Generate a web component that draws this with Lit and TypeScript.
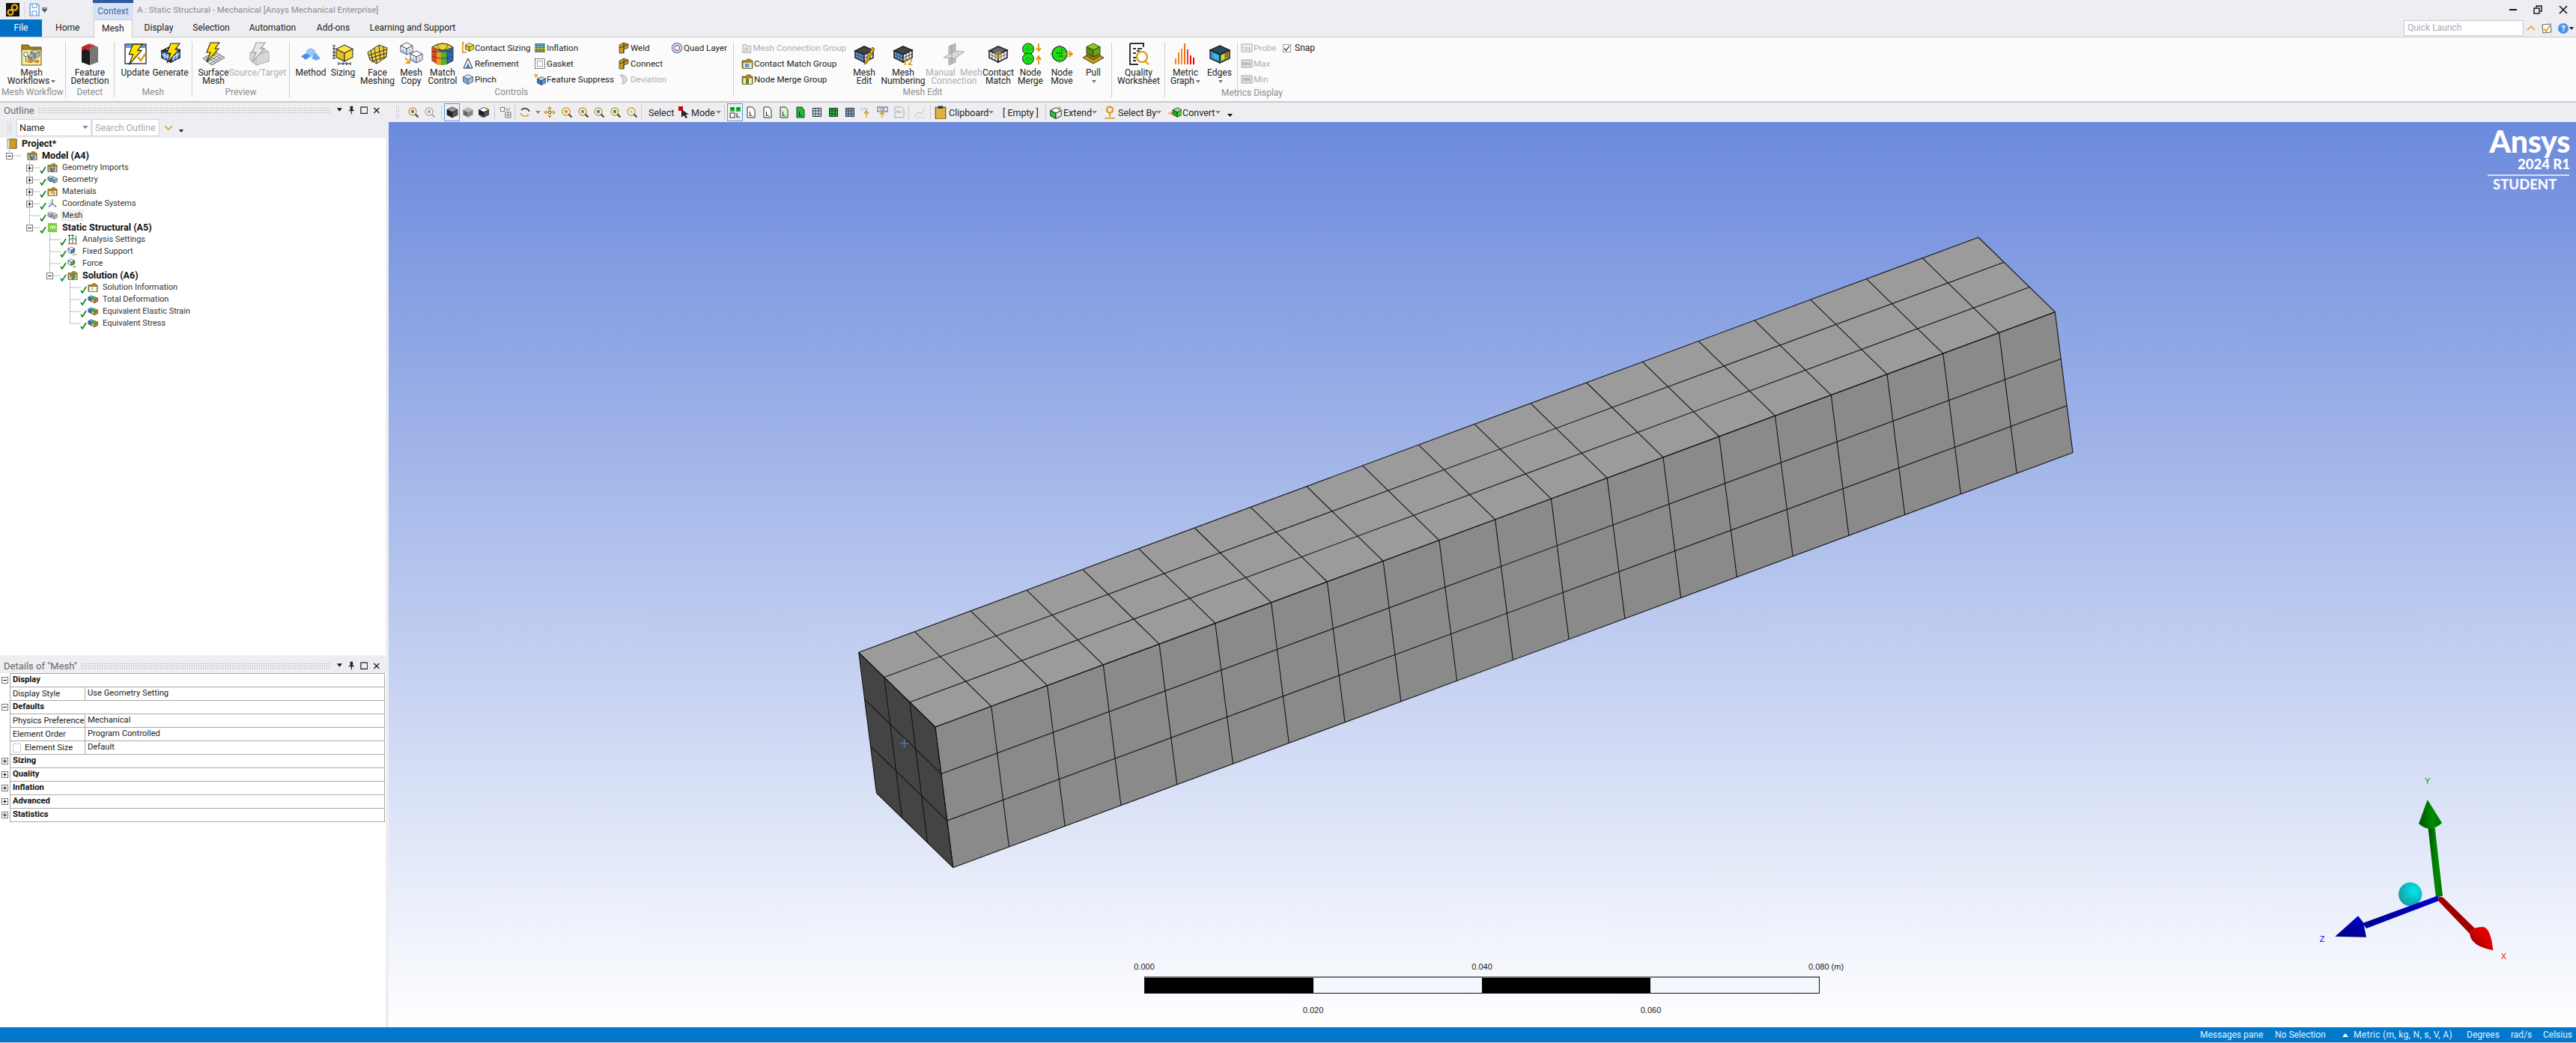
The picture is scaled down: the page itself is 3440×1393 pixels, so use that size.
import { LitElement, html, css, svg } from "lit";
import { customElement } from "lit/decorators.js";

const big = (c: any, w = 32, h = 32) => html`<svg width=${w} height=${h} viewBox="0 0 32 32">${c}</svg>`;
const sm = (c: any, s = 16) => html`<svg width=${s} height=${s} viewBox="0 0 16 16">${c}</svg>`;

const cube = (cx: number, cy: number, r: number, t: string, l: string, f: string, st = "#222", sw = 1) => svg`
  <polygon points="${cx},${cy - r} ${cx + r},${cy - r / 2} ${cx},${cy} ${cx - r},${cy - r / 2}" fill=${t} stroke=${st} stroke-width=${sw}/>
  <polygon points="${cx - r},${cy - r / 2} ${cx},${cy} ${cx},${cy + r} ${cx - r},${cy + r / 2}" fill=${l} stroke=${st} stroke-width=${sw}/>
  <polygon points="${cx},${cy} ${cx + r},${cy - r / 2} ${cx + r},${cy + r / 2} ${cx},${cy + r}" fill=${f} stroke=${st} stroke-width=${sw}/>`;

const bolt = (fill = "#ffe000", st = "#222", dx = 0, dy = 0, k = 1) => svg`<path transform="translate(${dx} ${dy}) scale(${k})" d="M11 1 L23 1 L17 9 L22 9 L6 27 L11 14 L6 14 Z" fill=${fill} stroke=${st} stroke-width="1.1"/>`;

const box = (fillT: string, fillL: string, fillR: string, grid = "#fff") => svg`
  <polygon points="4,12 16,6 28,11 16,17" fill=${fillT} stroke="#222" stroke-width="1.6"/>
  <polygon points="4,12 16,17 16,27 4,21" fill=${fillL} stroke="#222" stroke-width="1.6"/>
  <polygon points="16,17 28,11 28,21 16,27" fill=${fillR} stroke="#222" stroke-width="1.6"/>
  <path d="M8 14 V23 M12 15.5 V25 M4 16.5 L16 21.5 M20 15 V25 M24 13 V23 M16 21.5 L28 16 M10 9 L22 14 M10 14.5 L22 8.5" stroke=${grid} stroke-width="1" fill="none"/>`;

const folder = (body = "#f5eeb0") => svg`
  <path d="M1 4 H6 L7.5 2 H12 L13 4 H15 V14 H1 Z" fill="#b88a10" stroke="#5c4a10" stroke-width=".7"/>
  <rect x="2" y="6" width="12.5" height="8.5" fill=${body} stroke="#6a5518" stroke-width=".8"/>`;

const ICON: Record<string, any> = {
  meshWf: big(svg`<path d="M3 4 H12 L14 7 H29 V14 H3 Z" fill="#a8801a" stroke="#5c4a10"/><rect x="3" y="10" width="26" height="21" fill="#f4ecaa" stroke="#6a5518"/>
    ${cube(21, 16, 6, "#c8d0c8", "#98a098", "#b0b8b0", "#555", .7)}${cube(16, 21, 4.5, "#c8d0c8", "#98a098", "#b0b8b0", "#555", .7)}
    <rect x="6" y="14" width="5" height="5" fill="#fff" stroke="#777"/><rect x="12" y="24" width="5" height="4" fill="#e08a10"/><rect x="21" y="24" width="5" height="4" fill="#e08a10"/><path d="M8.5 19 V26 H12 M17 26 H21" stroke="#7a6a20" fill="none"/>`),
  featDet: big(svg`<path d="M5 7 L16 2 L27 7 V27 L16 31 L5 27 Z" fill="#777"/><path d="M5 7 L16 12 V31 L5 27 Z" fill="#1c1c1c"/><path d="M5 7 L13 3 L19 6 L15 8 L16 13 L11 9 L5 12 Z" fill="#cc1d2a"/><circle cx="20" cy="5.5" r="2" fill="#e0304a"/>`),
  update: big(svg`<rect x="2" y="3" width="28" height="26" fill="#fff" stroke="#333" stroke-width="1.4"/><rect x="3" y="4" width="26" height="4" fill="#5a9be8"/>${bolt("#ffe000", "#222", 1, 2, 1.05)}<path d="M19 20 L23 25 L29 16" stroke="#d89a10" stroke-width="2.4" fill="none"/>`),
  generate: big(svg`${box("#3a3a3a", "#4a8ae0", "#4a8ae0")}${bolt("#ffe000", "#222", 5, 1, 1)}`),
  surface: big(svg`<polygon points="2,22 18,13 31,21 14,31" fill="#e4e4e4" stroke="#444" stroke-width=".8"/><path d="M6 20 L19 28 M10 18 L23 26 M14 15.5 L27 23.5 M5 24 L21 15 M9 26 L25 17 M12 29 L28 19" stroke="#555" stroke-width=".7"/>${bolt("#ffe000", "#222", 1, 0, 1)}`),
  source: big(svg`<polygon points="6,14 22,7 31,14 31,26 14,31 6,24" fill="#d8d8d8" stroke="#aaa"/><path d="M14 31 V18 L31 12" stroke="#aaa" fill="none"/>${bolt("#e8e8e8", "#999", 3, 0, 1)}`),
  method: big(svg`<polygon points="16,8 22,11 22,17 16,20 10,17 10,11" fill="#9cc6f4"/><polygon points="3,19 10,15 16,19 9,24" fill="#4a90e8"/><polygon points="17,22 22,14 29,22 23,25" fill="#6aa8f0"/>`),
  sizing: big(svg`${cube(18, 15, 11, "#ffe450", "#e0c020", "#f4d830", "#333", 1.1)}<path d="M4 5 V22 M2 5 H6 M2 9 H6 M2 14 H6 M2 18 H6 M2 22 H6 M10 29 H26 M10 27 V31 M16 27 V31 M21 27 V31 M26 27 V31" stroke="#222" fill="none"/>`),
  faceMesh: big(svg`<polygon points="3,14 18,4 29,8 28,20 15,29 6,24" fill="#f0d040" stroke="#333"/><path d="M7 11 L10 27 M12 8 L15 29 M18 4 L20 24 M24 6 L25 22 M4 18 L28 10 M5 22 L28 15 M8 26 L28 20" stroke="#333" stroke-width="1" fill="none"/>`),
  meshCopy: big(svg`${cube(10, 9, 8, "#fff", "#f2f6ff", "#e8f0ff", "#444", .9)}${cube(23, 20, 8, "#fff", "#f2f6ff", "#e8f0ff", "#444", .9)}<path d="M6 9 V15 M14 9 V15 M19 20 V26 M27 20 V26 M2 11 L10 15 M15 22 L23 26" stroke="#5a9be8" fill="none"/><path d="M8 21 L14 28 M14 23 V28 H9" stroke="#e09a10" stroke-width="1.8" fill="none"/>`),
  match: big(svg`<path d="M2 7 Q16 -3 30 7 V25 Q16 35 2 25 Z" fill="#2a6ab0" stroke="#333"/><path d="M2 7 Q16 -3 30 7 Q16 15 2 7 Z" fill="#f0d030" stroke="#333"/><path d="M8 8 V30 L2 25 V7 Z" fill="#d84a20"/><path d="M8 11 V30 Q11 31 14 31 V13 Z" fill="#e8a020"/><path d="M14 13 V31 Q19 31 22 30 V12 Z" fill="#50b040"/><path d="M2 13 L30 13 M2 19 Q16 25 30 19 M8 3 L14 13 M24 3 L18 13 M22 12 V30" stroke="#333" stroke-width=".8" fill="none"/>`),
  meshEdit: big(svg`${box("#444", "#5a9be8", "#eef3ff", "#444")}<path d="M17 27 L27 7 L30 9 L20 28 L16 30 Z" fill="#e0a820" stroke="#7a5a10"/>`),
  numbering: big(svg`${box("#444", "#5a9be8", "#eef3ff", "#444")}<text x="15" y="31" font-size="12" font-weight="700" font-family="Roboto" fill="#d89a10">12</text>`),
  manual: big(svg`<polygon points="9,6 18,2 18,27 9,31" fill="#bcbcbc" stroke="#aaa"/><polygon points="2,21 18,12 30,13 17,22" fill="#d8d8d8" stroke="#aaa"/><path d="M13 4 V29" stroke="#999"/>`),
  contact: big(svg`${box("#666", "#f0f4ff", "#eef3ff", "#6a6a6a")}<polygon points="10,15 19,12 22,20 13,23" fill="#c8a040" opacity=".6"/>`),
  nodeMerge: big(svg`<circle cx="13" cy="9.5" r="7.5" fill="#19e010" stroke="#222"/><circle cx="13" cy="22.5" r="7.5" fill="#19e010" stroke="#222"/><path d="M13 6 v1 M13 10 v1 M10 9 h1 M16 9 h1 M13 21 v1 M13 25 v1 M10 23 h1 M16 23 h1" stroke="#222"/><path d="M27 2 V11 M24 8 L27 12 L30 8 M27 30 V20 M24 24 L27 19 L30 24" stroke="#d89a10" stroke-width="1.8" fill="none"/>`),
  nodeMove: big(svg`<circle cx="13" cy="16" r="10" fill="#19e010" stroke="#222" stroke-width="1.2"/><path d="M9 15h2M12 15h2M15 15h2M15 11h2M15 19h2M12 19h2" stroke="#222" stroke-width="1.4"/><path d="M1 16h1M13 4v1M13 27v1" stroke="#222"/><path d="M17 16 H29 M25 12 L30 16 L25 20" stroke="#d89a10" stroke-width="1.8" fill="none"/>`),
  pull: big(svg`<polygon points="2,21 16,13 30,21 16,29" fill="#c89a20" stroke="#4a3a10"/><polygon points="6,18 16,12 26,18 16,24" fill="#a07a10" stroke="#4a3a10"/>${cube(16, 11, 9, "#8ac820", "#558a10", "#6aa818", "#2a3a10", .9)}`),
  quality: big(svg`<path d="M4 2 H22 V7 M4 2 V30 H15" stroke="#333" stroke-width="2" fill="none"/><path d="M8 9 H12 M14 9 H20 M8 15 H12 M8 21 H12 M8 25 H12 M13 12 H17" stroke="#333" stroke-width="2"/><circle cx="20" cy="20" r="7" fill="none" stroke="#d89a10" stroke-width="2.2"/><path d="M23 25 L29 30" stroke="#d89a10" stroke-width="2.2"/>`),
  metric: big(svg`<path d="M3 30 V22" stroke="#f08020" stroke-width="2"/><path d="M7 30 V14" stroke="#f08020" stroke-width="2"/><path d="M11 30 V9" stroke="#f09020" stroke-width="2"/><path d="M15 30 V2" stroke="#f07020" stroke-width="2"/><path d="M19 30 V10" stroke="#f04020" stroke-width="2"/><path d="M23 30 V18" stroke="#f01010" stroke-width="2"/><path d="M27 30 V21" stroke="#f00010" stroke-width="2"/>`),
  edges: big(svg`<polygon points="3,11 16,5 29,11 16,17" fill="#2a4a6a" stroke="#222" stroke-width="1.4"/><polygon points="3,11 16,17 16,28 3,22" fill="#3a90e0" stroke="#222" stroke-width="1.4"/><polygon points="16,17 29,11 29,22 16,28" fill="#60b040" stroke="#222" stroke-width="1.4"/><path d="M8 15 L14 18 V24 L8 21 Z" fill="#30c8d0"/><path d="M18 18 L22 16 V23 L18 25 Z" fill="#e8d030"/><path d="M23 15 L27 13 V20 L23 22 Z" fill="#e84a20"/>`),

  cs: sm(svg`${cube(10, 7, 5.5, "#ffe450", "#e0c020", "#f4d830", "#333", .7)}<path d="M3 1 H1 V14 H6" stroke="#d88a10" stroke-width="1.5" fill="none"/>`),
  ref: sm(svg`<polygon points="8,1 14,14 2,14" fill="#f4f8ff" stroke="#222"/><polygon points="8,7 11,14 5,14" fill="#3a78d0"/>`),
  pinch: sm(svg`${cube(8, 8, 6.5, "#d4e4f4", "#88a8cc", "#a8c4e0", "#456", .8)}`),
  infl: sm(svg`<rect x="1" y="2" width="14" height="12" fill="#3a8a90"/><path d="M1 4h14M1 6.5h14" stroke="#9ad0d8"/><path d="M1 9h14" stroke="#e8d030" stroke-width="1.5"/><path d="M1 12h14" stroke="#c8a020" stroke-width="1.5"/><path d="M4 2v12M8 2v12M12 2v12" stroke="#234" stroke-width=".5"/>`),
  gasket: sm(svg`<rect x="1.5" y="1.5" width="13" height="13" fill="none" stroke="#333" stroke-dasharray="1.5 1"/><rect x="4.5" y="4.5" width="7" height="7" fill="none" stroke="#555" stroke-dasharray="1 1"/>`),
  fsup: sm(svg`<path d="M1 1 L5 5 M5 1 L1 5" stroke="#d89a10" stroke-width="1.4"/>${cube(10, 10, 5.5, "#bcd8f0", "#3a78c0", "#5a9be0", "#234", .7)}`),
  weld: sm(svg`<polygon points="2,4 8,1 14,3 14,8 8,10 8,15 2,15" fill="#c89a20" stroke="#333" stroke-width=".7"/><path d="M2 8 L8 6 L14 3 M8 1 V15" stroke="#333" stroke-width="1" fill="none"/>`),
  dev: sm(svg`<path d="M3 2 Q13 3 12 9 Q11 14 5 14 Q10 10 3 2 Z" fill="#ddd" stroke="#aaa"/>`),
  quad: sm(svg`<circle cx="8" cy="8" r="6.5" fill="#fff" stroke="#4a90e8" stroke-width="1.6"/><circle cx="8" cy="8" r="3.5" fill="#fff" stroke="#d84040" stroke-width="1.4"/>`),
  gfold: sm(svg`<path d="M2 3 H7 L8 5 H14 V15 H2 Z" fill="#e4e4e4" stroke="#aaa"/><rect x="5" y="8" width="5" height="5" fill="#ccc"/>`),
  gc: sm(svg`${folder("#e8e2c0")}<rect x="5" y="8" width="5" height="5" fill="#5a9be8"/>`),
  gn: sm(svg`${folder("#f5eeb0")}<rect x="6.5" y="7.5" width="3" height="6" fill="#18b018" stroke="#222" stroke-width=".5"/>`),
  probe: sm(svg`<rect x="1" y="3" width="14" height="10" fill="#eee" stroke="#aaa"/><text x="2.5" y="10.5" font-size="6" font-family="Roboto" fill="#999">123</text>`),
  max: sm(svg`<rect x="1" y="3" width="14" height="10" fill="#ddd" stroke="#aaa"/><text x="2" y="10" font-size="5" font-family="Roboto" fill="#888">MAX</text>`),
  min: sm(svg`<rect x="1" y="3" width="14" height="10" fill="#ddd" stroke="#aaa"/><text x="3" y="10" font-size="5" font-family="Roboto" fill="#888">MIN</text>`),
};

const lens = (c: string, ring = "#c89a20", handle = "#333") => sm(svg`<circle cx="7" cy="7" r="5" fill="#fff" stroke=${ring} stroke-width="1.4"/><circle cx="7" cy="7" r="2.4" fill=${c}/><path d="M10.5 10.5 L14.5 14.5" stroke=${handle} stroke-width="1.8"/>`);
const page = (f: string, d = "#333") => sm(svg`<path d="M3 1 L10 1 L13 5 V15 H3 Z" fill=${f} stroke=${d}/><path d="M6.5 7 L6.5 13 L8 11.5 L10 13.5" stroke="#222" fill="none"/>`);
const gridCube = (c: string) => sm(svg`<rect x="2.5" y="2.5" width="11" height="11" fill=${c} stroke="#333"/><path d="M6 2.5 V13.5 M10 2.5 V13.5 M2.5 6 H13.5 M2.5 10 H13.5" stroke="#222" stroke-width=".8"/>`);

const TB: Record<string, any> = {
  zi: lens("#777"), zo: lens("#aaa", "#aaa", "#aaa"),
  c1: sm(svg`${cube(8, 8, 7, "#999", "#222", "#555", "#222", .7)}`),
  c2: sm(svg`${cube(8, 8, 6.5, "#bbb", "#666", "#888", "#aaa", .5)}`),
  c3: sm(svg`${cube(8, 8, 6.5, "#fff", "#222", "#555", "#222", .8)}<path d="M11 2 L14 4" stroke="#d89a10" stroke-width="2"/><path d="M3 12 L6 14" stroke="#3a78d0" stroke-width="2"/>`),
  gr: sm(svg`<rect x="1.5" y="1.5" width="5" height="5" fill="#fff" stroke="#777"/><rect x="8" y="8" width="7" height="7" fill="#fff" stroke="#777"/><path d="M11.5 8 V15 M8 11.5 H15 M8 2 L11 6 L14 2" stroke="#777" fill="none"/>`),
  rot: sm(svg`<path d="M3 5 A6.5 6.5 0 0 1 14 7" stroke="#222" stroke-width="1.4" fill="none"/><path d="M13 11 A6.5 6.5 0 0 1 2 9" stroke="#d89a10" stroke-width="1.4" fill="none"/>`),
  pan: sm(svg`<circle cx="8" cy="8" r="2" fill="#fff" stroke="#222"/><path d="M8 0 L11 4 H5 Z M8 16 L11 12 H5 Z M0 8 L4 5 V11 Z M16 8 L12 5 V11 Z" fill="#d89a10"/>`),
  z1: lens("#d89a10"), z2: lens("#888"), z3: lens("#4a80d0"), z4: lens("#30a040"), z5: lens("#c8c8c8"),
  mode: sm(svg`<rect x="0" y="0" width="6" height="6" fill="#e00000"/><path d="M4 4 L4 15 L7 12 L10 16 L12 15 L9.5 11 L14 11 Z" fill="#222"/>`),
  sel: sm(svg`<rect x="1" y="1" width="6" height="6" fill="#19c030"/><rect x="9" y="1" width="6" height="6" fill="#19c030"/><rect x="1" y="9" width="6" height="6" fill="#fff" stroke="#333"/><path d="M10 9 L10 15 L12 13.5 L14 15.5" stroke="#222" fill="none"/><path d="M2 3 H6 M10 3 H14" stroke="#222"/>`),
  p1: page("#fff"), p2: page("#fff"), p3: page("#d8f8d0"), p4: page("#19c030"),
  g1: gridCube("#d0e4f8"), g2: gridCube("#19c030"), g3: gridCube("#8ab0d8"),
  xyz: sm(svg`<text x="0" y="5" font-size="4.4" font-family="Roboto" fill="#888">X.Y.Z</text><path d="M8 7 L8 15 M5 10 L8 6 L11 10" stroke="#c89a20" fill="none" stroke-width="1.3"/>`),
  num: sm(svg`<rect x="1" y="1" width="13" height="6" fill="#fff" stroke="#555"/><text x="2.5" y="6" font-size="5" font-family="Roboto" fill="#333">100</text><path d="M7 8 V15 M4 11 L7 8 L10 11" stroke="#c89a20" fill="none" stroke-width="1.3"/>`),
  abc: sm(svg`<path d="M2 1 H11 L14 4 V15 H2 Z" fill="#eee" stroke="#aaa"/><text x="3" y="9" font-size="5" font-family="Roboto" fill="#999">Abc</text>`),
  graph: sm(svg`<path d="M1 13 L6 8 L10 10 L15 3" stroke="#bbb" fill="none"/><path d="M1 15 H15" stroke="#ccc" stroke-dasharray="2 1"/>`),
  clip: sm(svg`<rect x="2" y="2" width="12" height="14" fill="#e0b040" stroke="#554"/><rect x="5" y="0.5" width="6" height="3" fill="#333"/>`, 18),
  ext: sm(svg`${cube(8, 9, 6.5, "#fff", "#30c040", "#d8f0d8", "#222", .8)}<path d="M12 1 V5 M10 3 H14" stroke="#c89a20" stroke-width="1.2"/>`, 18),
  pin: sm(svg`<circle cx="8" cy="5" r="3.5" fill="none" stroke="#d89a10" stroke-width="2"/><path d="M8 8 V13" stroke="#d89a10" stroke-width="1.6"/><path d="M2 15 H14" stroke="#d89a10" stroke-width="1.4"/>`, 18),
  conv: sm(svg`<path d="M0 9 H5 M3 7 L6 9 L3 11" stroke="#d89a10" fill="none"/>${cube(11, 8, 5.5, "#8fe88f", "#19b020", "#40d040", "#222", .7)}`, 18),
};

const T: any[] = [
  [7], ["grip", 10], [5], ["i", 22, "zi"], ["i", 22, "zo"], ["i", 8, null, "sep"], ["i", 21, "c1", "act"], ["i", 21, "c2"], ["i", 21, "c3"], ["i", 8, null, "sep"], ["i", 22, "gr"], ["i", 2, null, "sep"],
  ["i", 26, "rot"], ["d", 8], ["i", 24, "pan"], ["i", 22, "z1"], ["i", 21, "z2"], ["i", 22, "z3"], ["i", 22, "z4"], ["i", 22, "z5"], ["i", 2, null, "sep"], [9],
  ["x", 38, "Select"], ["i", 19, "mode"], ["x", 32, "Mode"], ["d", 8], [3], ["i", 2, null, "sep"], [3], ["i", 21, "sel", "act"],
  ["i", 22, "p1"], ["i", 22, "p2"], ["i", 22, "p3"], ["i", 22, "p4"], ["i", 22, "g1"], ["i", 22, "g2"], ["i", 22, "g3"], ["i", 22, "xyz"], ["i", 22, "num"], ["i", 22, "abc"], ["i", 2, null, "sep"], [1],
  ["i", 26, "graph"], ["i", 2, null, "sep"], [2], ["i", 22, "clip"], ["x", 52, "Clipboard"], ["d", 8], [12], ["x", 50, "[ Empty ]"], [6], ["i", 2, null, "sep"], [3], ["i", 20, "ext"], ["x", 37, "Extend"], ["d", 8], [6],
  ["i", 22, "pin"], ["x", 50, "Select By"], ["d", 8], [7], ["i", 21, "conv"], ["x", 43, "Convert"], ["d", 8], [8], ["tri", 8],
];

type Big = { k: "b"; w: number; i: string; l: string[]; dis?: boolean; car?: boolean };
type Col = { k: "c"; w: number; p: number; rows: [string, string, boolean?][] };
const GROUPS: { w: number; label: string; pad?: number; items: (Big | Col | any)[] }[] = [
  { w: 88, label: "Mesh Workflow", items: [{ k: "b", w: 84, i: "meshWf", l: ["Mesh", "Workflows"], car: true }] },
  { w: 64.5, label: "Detect", items: [{ k: "b", w: 64, i: "featDet", l: ["Feature", "Detection"] }] },
  { w: 104.5, label: "Mesh", pad: 4, items: [{ k: "b", w: 48, i: "update", l: ["Update"] }, { k: "b", w: 46, i: "generate", l: ["Generate"] }] },
  { w: 130, label: "Preview", pad: 1, items: [{ k: "b", w: 54, i: "surface", l: ["Surface", "Mesh"] }, { k: "b", w: 64, i: "source", l: ["Source/Target"], dis: true }] },
  { w: 593, label: "Controls", pad: 6, items: [
    { k: "b", w: 44, i: "method", l: ["Method"] }, { k: "b", w: 42, i: "sizing", l: ["Sizing"] }, { k: "b", w: 50, i: "faceMesh", l: ["Face", "Meshing"] }, { k: "b", w: 40, i: "meshCopy", l: ["Mesh", "Copy"] }, { k: "b", w: 44, i: "match", l: ["Match", "Control"] },
    { k: "c", w: 100, p: 4, rows: [["cs", "Contact Sizing"], ["ref", "Refinement"], ["pinch", "Pinch"]] },
    { k: "c", w: 112, p: 0, rows: [["infl", "Inflation"], ["gasket", "Gasket"], ["fsup", "Feature Suppress"]] },
    { k: "c", w: 68, p: 0, rows: [["weld", "Weld"], ["weld", "Connect"], ["dev", "Deviation", true]] },
    { k: "c", w: 86, p: 3, rows: [["quad", "Quad Layer"]] },
  ] },
  { w: 505, label: "Mesh Edit", items: [
    { k: "c", w: 150, p: 10, rows: [["gfold", "Mesh Connection Group", true], ["gc", "Contact Match Group"], ["gn", "Node Merge Group"]] },
    { k: "b", w: 48, i: "meshEdit", l: ["Mesh", "Edit"] }, { k: "b", w: 56, i: "numbering", l: ["Mesh", "Numbering"] }, { k: "b", w: 80, i: "manual", l: ["Manual  Mesh", "Connection"], dis: true },
    { k: "b", w: 38, i: "contact", l: ["Contact", "Match"] }, { k: "b", w: 48, i: "nodeMerge", l: ["Node", "Merge"] }, { k: "b", w: 36, i: "nodeMove", l: ["Node", "Move"] }, { k: "b", w: 48, i: "pull", l: ["Pull", ""], car: true },
  ] },
  { w: 71, label: "", items: [{ k: "b", w: 71, i: "quality", l: ["Quality", "Worksheet"] }] },
  { w: 97, label: "", items: [{ k: "b", w: 54, i: "metric", l: ["Metric", "Graph"], car: true }, { k: "b", w: 37, i: "edges", l: ["Edges", ""], car: true }] },
];

const TICON: Record<string, any> = {
  project: sm(svg`<rect x="4" y="1" width="11" height="14" fill="#cfa010" stroke="#444"/><rect x="1" y="1" width="3.5" height="14" fill="#e8e8e8" stroke="#888"/>`),
  model: sm(svg`${folder("#f4ecc0")}${cube(8, 10, 4, "#bcd0e4", "#5a80a8", "#7a9cc0", "#345", .6)}`),
  gimp: sm(svg`${folder("#f4ecc0")}${cube(8, 10, 4, "#bcd0e4", "#5a80a8", "#7a9cc0", "#345", .6)}`),
  geo: sm(svg`${cube(5.5, 6.5, 4.5, "#c4d8ec", "#7a9cc0", "#9ab8d4", "#456", .7)}${cube(11, 8.5, 4.5, "#c4d8ec", "#7a9cc0", "#9ab8d4", "#456", .7)}`),
  mat: sm(svg`${folder("#f4e8b0")}<path d="M5 8 L10 13 L12 10 L8 6 Z" fill="#e8a880" stroke="#a06a40" stroke-width=".6"/>`),
  coord: sm(svg`<path d="M8 8 V1" stroke="#19b030" stroke-width="1.4"/><path d="M8 8 L2 13" stroke="#2a58d0" stroke-width="1.4"/><path d="M8 8 L14 13" stroke="#d82020" stroke-width="1.4"/><path d="M4 3 L12 13 M2 7 L6 8" stroke="#9ad" stroke-width="1"/>`),
  mesh: sm(svg`${cube(5.5, 6.5, 4.5, "#ddd", "#aab", "#bbc", "#667", .7)}${cube(11, 8.5, 4.5, "#ddd", "#aab", "#bbc", "#667", .7)}`),
  stat: sm(svg`<rect x="1" y="1" width="14" height="14" fill="#7ed040"/><path d="M4 6 H13 M6 6 L5 10 M9 6 L8 10 M12 6 L11 10" stroke="#fff" stroke-width="1.2" fill="none"/>`),
  ana: sm(svg`<path d="M3 2 V14 M8 2 V14 M13 2 V14" stroke="#333"/><path d="M1 1.5 H5 M6 1.5 H10" stroke="#22c" stroke-width="1.3"/><path d="M1 14.5 H15" stroke="#d22" stroke-width="1.4" stroke-dasharray="3 1"/><path d="M2 10 Q8 2 14 10" stroke="#19b030" stroke-width="1.3" fill="none"/>`),
  fix: sm(svg`${cube(6, 6, 5, "#fff", "#d8e8f8", "#2a8ae0", "#345", .8)}<path d="M8 14 L11 11 M11 14 L14 11" stroke="#d8a020" stroke-width="1.3"/>`),
  force: sm(svg`${cube(6, 6, 5, "#fff", "#d8f0d8", "#22c030", "#345", .8)}<path d="M9 14 L14 11 M9 14 H12 M9 14 V12" stroke="#d8a020" stroke-width="1.2"/>`),
  sol: sm(svg`${folder("#f4ecc0")}${cube(8, 10, 4, "#30a8e0", "#e8c030", "#40b040", "#345", .5)}`),
  info: sm(svg`${folder("#fdf8d8")}<text x="6" y="13" font-size="8" font-family="Roboto" fill="#2a6ad0">i</text>`),
  res: sm(svg`${cube(5.5, 6.5, 4.5, "#30c8d0", "#2a70d0", "#30a860", "#345", .7)}${cube(10.5, 8.5, 5, "#60c040", "#e8c030", "#e87020", "#345", .7)}`),
};

const TREE: [number, string, string, boolean?, string?, boolean?][] = [
  [0, "project", "Project*", true],
  [1, "model", "Model (A4)", true, "-"],
  [2, "gimp", "Geometry Imports", false, "+"],
  [2, "geo", "Geometry", false, "+"],
  [2, "mat", "Materials", false, "+"],
  [2, "coord", "Coordinate Systems", false, "+"],
  [2, "mesh", "Mesh", false, "", true],
  [2, "stat", "Static Structural (A5)", true, "-"],
  [3, "ana", "Analysis Settings"],
  [3, "fix", "Fixed Support"],
  [3, "force", "Force"],
  [3, "sol", "Solution (A6)", true, "-"],
  [4, "info", "Solution Information"],
  [4, "res", "Total Deformation"],
  [4, "res", "Equivalent Elastic Strain"],
  [4, "res", "Equivalent Stress"],
];

const DETAILS: any[] = [
  ["-", "Display"], ["p", "Display Style", "Use Geometry Setting"],
  ["-", "Defaults"], ["p", "Physics Preference", "Mechanical"], ["p", "Element Order", "Program Controlled"], ["c", "Element Size", "Default"],
  ["+", "Sizing"], ["+", "Quality"], ["+", "Inflation"], ["+", "Advanced"], ["+", "Statistics"],
];

const STATUS: [string, number, string][] = [
  ["Messages pane", 100, ""], ["No Selection", 90, ""], ["", 15, "up"], ["Metric (m, kg, N, s, V, A)", 151, "wide"], ["Degrees", 59, ""], ["rad/s", 43, ""], ["Celsius", 44, ""],
];

const pinIcons = html`<span class="panelbtns">
  <svg width="10" height="6" viewBox="0 0 10 6"><path d="M1 0 H9 L5 5 Z" fill="#111"/></svg>
  <svg width="10" height="14" viewBox="0 0 10 14"><path d="M3 1 H7 V7 H9 V8.5 H5.7 V13 H4.3 V8.5 H1 V7 H3 Z" fill="#222"/></svg>
  <svg width="12" height="12" viewBox="0 0 12 12"><rect x="1" y="1.5" width="10" height="9.5" fill="none" stroke="#222" stroke-width="1.4"/></svg>
  <svg width="11" height="11" viewBox="0 0 11 11"><path d="M1.5 1.5 L9.5 9.5 M9.5 1.5 L1.5 9.5" stroke="#222" stroke-width="1.5"/></svg>
</span>`;

function exp(ch: string) {
  return html`<svg class="exp" width="9" height="9" viewBox="0 0 9 9"><rect x=".5" y=".5" width="8" height="8" fill="#fff" stroke="#777"/><path d="M2 4.5 H7 ${ch === "+" ? "M4.5 2 V7" : ""}" stroke="#111"/></svg>`;
}
const check = html`<svg width="9" height="10" viewBox="0 0 9 10"><path d="M1 6 L3 9 L8 1" stroke="#0a8a1a" stroke-width="1.7" fill="none"/></svg>`;

type P = [number, number];
const add = (a: P, b: P, k = 1): P => [a[0] + b[0] * k, a[1] + b[1] * k];
const pts = (...a: P[]) => a.map((p) => p.join(",")).join(" ");

function meshShape() {
  const A: P = [1146.7, 871.3], B: P = [1249, 971];
  const L: P = [(2744.3 - 1249) / 20, (416.7 - 971) / 20];
  const V: P = [(1272.7 - 1249) / 3, (1158.7 - 971) / 3];
  const W: P = [(B[0] - A[0]) / 3, (B[1] - A[1]) / 3];
  const C = add(B, V, 3), D = add(A, V, 3), F = add(B, L, 20), E = add(A, L, 20), G = add(C, L, 20);
  const lines: [P, P][] = [];
  for (let i = 0; i <= 20; i++) {
    lines.push([add(A, L, i), add(B, L, i)]);
    lines.push([add(B, L, i), add(C, L, i)]);
  }
  for (let j = 0; j <= 3; j++) {
    lines.push([add(A, W, j), add(E, W, j)]);
    lines.push([add(B, V, j), add(F, V, j)]);
    lines.push([add(A, V, j), add(B, V, j)]);
    lines.push([add(A, W, j), add(D, W, j)]);
  }
  return svg`<polygon points=${pts(A, E, F, B)} fill="#9b9b9b"/>
    <polygon points=${pts(B, F, G, C)} fill="#8a8a8a"/>
    <polygon points=${pts(A, B, C, D)} fill="#444"/>
    ${lines.map(([p, q]) => svg`<line x1=${p[0]} y1=${p[1]} x2=${q[0]} y2=${q[1]} stroke="#141414" stroke-width="1.1"/>`)}
    <path d="M1201.7 992.7 H1213.7 M1207.7 986.7 V998.7" stroke="#5a80d8" stroke-width="1.1"/>`;
}

const triad = svg`
  <defs>
    <linearGradient id="tg" x1="0" x2="1" y1="0" y2="0"><stop offset="0" stop-color="#005400"/><stop offset=".6" stop-color="#008c00"/><stop offset="1" stop-color="#007000"/></linearGradient>
    <linearGradient id="tb" x1="0" x2="0" y1="0" y2="1"><stop offset="0" stop-color="#0000d0"/><stop offset="1" stop-color="#000088"/></linearGradient>
    <linearGradient id="tr" x1="1" x2="0" y1="0" y2="1"><stop offset="0" stop-color="#f00000"/><stop offset=".55" stop-color="#d00000"/><stop offset="1" stop-color="#500000"/></linearGradient>
    <radialGradient id="ts" cx=".65" cy=".35" r=".75"><stop offset="0" stop-color="#00e8e8"/><stop offset="1" stop-color="#1898a0"/></radialGradient>
  </defs>
  <circle cx="3218.7" cy="1194.3" r="15.7" fill="url(#ts)"/>
  <polygon points="3242.5,1106 3251.7,1106 3262,1197 3252.7,1197" fill="url(#tg)"/>
  <path d="M3241.7 1068 L3230 1100 Q3245 1114 3261 1099 Z" fill="url(#tg)"/>
  <polygon points="3256,1196 3257,1203 3160,1240 3155,1233" fill="url(#tb)"/>
  <polygon points="3118.3,1250.7 3149,1223.3 3156,1232 3160,1251.7" fill="url(#tb)"/>
  <polygon points="3257,1197 3263,1199 3305,1240 3298,1247 3256,1203" fill="#a00000"/>
  <path d="M3298 1247 Q3300 1238 3316 1238 Q3326 1239 3329.3 1269.3 Q3300 1264 3298 1247 Z" fill="url(#tr)"/>
  <text x="3241.7" y="1047" class="lbl" fill="#0a9a0a" text-anchor="middle">Y</text>
  <text x="3101" y="1258" class="lbl" fill="#0000ff" text-anchor="middle">Z</text>
  <text x="3343.5" y="1281" class="lbl" fill="#f00000" text-anchor="middle">X</text>`;

@customElement("app-root")
export class AppRoot extends LitElement {
  static styles = css`
    :host { display: block; width: 3440px; height: 1393px; overflow: hidden; font: 12px Roboto, "Noto Sans", sans-serif; color: #222; background: #eeeef2; }
    * { box-sizing: border-box; }
    .app { display: flex; flex-direction: column; height: 1393px; }
    .title { height: 26px; display: flex; align-items: center; flex: none; }
    .tl { width: 124px; display: flex; align-items: center; flex: none; padding-left: 8px; height: 100%; }
    .sv { margin-left: 6px; padding-left: 6px; border-left: 1px solid #d8d8dc; height: 22px; display: flex; align-items: center; gap: 3px; }
    .ctx { width: 54px; height: 26px; background: #d6e2f5; border-top: 4px solid #2f5a9e; text-align: center; line-height: 23px; color: #3f6aa8; flex: none; }
    .ttl { margin-left: 5px; color: #8a8a8a; font-size: 11.5px; }
    .win { margin-left: auto; display: flex; align-items: center; gap: 22px; padding-right: 11px; }
    .tabs { height: 23px; display: flex; flex: none; align-items: stretch; position: relative; z-index: 1; }
    .tab { text-align: center; line-height: 23px; flex: none; }
    .file { background: #0070c4; color: #fff; }
    .tab.on { background: #fbfbfb; border: 1px solid #cdcdcd; border-bottom: none; height: 25px; }
    .ql { margin-left: auto; display: flex; align-items: center; }
    .qlb { width: 160px; height: 21px; background: #fff; border: 1px solid #c8c8d4; color: #aaa; padding-left: 4px; line-height: 19px; }
    .qli { display: flex; align-items: center; gap: 8px; padding: 0 2px 0 4px; }
    .ribbon { height: 88px; flex: none; background: #fbfbfb; border-top: 1px solid #c9c9c9; border-bottom: 2px solid #cbcbcb; display: flex; padding: 6px 0 5px; }
    .group { display: flex; flex-direction: column; border-right: 1px solid #cfcfcf; flex: none; }
    .gc { display: flex; height: 61px; flex: none; }
    .gl { height: 12px; line-height: 12px; text-align: center; color: #8d8d8d; white-space: nowrap; }
    .bigb { display: flex; flex-direction: column; align-items: center; flex: none; }
    .bigi { height: 32px; display: flex; align-items: center; justify-content: center; margin-bottom: 4px; }
    .bt { height: 11px; line-height: 11px; white-space: pre; display: flex; align-items: center; }
    .dis { color: #aeaeae; }
    .car { width: 0; height: 0; border: 3px solid transparent; border-top: 4px solid #777; border-bottom: 0; margin-left: 2px; }
    .col { display: flex; flex-direction: column; gap: 5px; flex: none; }
    .sr { display: flex; align-items: center; height: 16px; gap: 1px; white-space: nowrap; font-size: 11.6px; }
    .last { display: flex; flex: none; }
    .pcol { display: flex; flex-direction: column; gap: 5px; width: 60px; padding-left: 4px; }
    .snap { display: flex; align-items: center; gap: 5px; height: 16px; }
    .cb { width: 11px; height: 11px; border: 1px solid #999; background: #fff; display: flex; align-items: center; justify-content: center; }
    .body { flex: 1; display: flex; min-height: 0; }
    .left { width: 515px; flex: none; display: flex; flex-direction: column; background: #fff; }
    .right { flex: 1; min-width: 0; margin-left: 4px; display: flex; flex-direction: column; }
    .ph { height: 20px; flex: none; display: flex; align-items: center; background: #eeeef2; padding-left: 5px; font-size: 13px; color: #666; }
    .dots { flex: 1; height: 9px; margin: 0 8px 0 5px; background-image: radial-gradient(#9a9a9a .7px, transparent .8px); background-size: 3px 3px; }
    .panelbtns { display: flex; align-items: center; gap: 7px; padding-right: 7px; width: 66px; }
    .srow { height: 27px; flex: none; background: #eeeef2; display: flex; align-items: center; padding-left: 9px; }
    .grip { width: 6px; height: 18px; background-image: radial-gradient(#999 .7px, transparent .8px); background-size: 3px 3px; margin-right: 7px; }
    .fld { height: 23px; background: #fff; border: 1px solid #d2d2da; padding-left: 3px; line-height: 21px; font-size: 12.5px; display: flex; align-items: center; }
    .f1 { width: 100px; justify-content: space-between; padding-right: 3px; margin-right: 1px; }
    .f2 { width: 90px; color: #aaa; }
    .tree { flex: none; height: 691px; position: relative; background: #fff; }
    .conn { position: absolute; left: 0; top: 0; pointer-events: none; }
    .tr { height: 16px; display: flex; align-items: center; white-space: nowrap; position: relative; }
    .slot { width: 18px; flex: none; display: flex; align-items: center; }
    .chk { width: 10px; flex: none; display: flex; align-items: flex-end; height: 16px; }
    .ti { width: 14px; height: 16px; flex: none; margin-right: 5px; display: flex; align-items: center; }
    .tt { padding: 0 1px; line-height: 16px; color: #333; font-size: 11px; }
    .tt.b { font-weight: 700; color: #111; font-size: 12.6px; }
    .tt.h { background: #f0f0f0; padding: 0 2px; margin-left: -1px; }
    .sp { height: 4px; flex: none; background: #eeeef2; }
    .dt { padding-right: 1px; flex: 1; background: #fff; }
    .dr { display: flex; height: 18px; width: 514px; }
    .gut { width: 13px; flex: none; display: flex; align-items: center; padding-left: 2px; }
    .cell { border: 1px solid #a8a8a8; border-width: 1px 1px 0 1px; line-height: 16px; padding-left: 3px; flex: 1; white-space: nowrap; font-size: 11.2px; }
    .cell.cat { font-weight: 700; color: #111; }
    .cell.k { flex: none; width: 100px; border-right: 0; display: flex; align-items: center; gap: 5px; }
    .cb2 { width: 11px; height: 12px; background: #fff; border: 1px solid #ccc; }
    .dend { margin-left: 13px; width: 501px; border-top: 1px solid #a8a8a8; }
    .tb { height: 26px; flex: none; background: #eeeef2; display: flex; align-items: center; }
    .tbi { display: flex; align-items: center; justify-content: center; height: 24px; flex: none; white-space: nowrap; }
    .tbi.txt { justify-content: flex-start; font-size: 12.5px; }
    .tbi.act { border: 1px solid #5a9be8; }
    .tbi.sep::after { content: ""; width: 1px; height: 20px; background: #ccc; }
    .vp { flex: 1; position: relative; overflow: hidden; background: linear-gradient(#6b8adc, #ffffff); }
    .vp svg.scene { position: absolute; inset: 0; }
    .lbl { font: 11px "Liberation Sans", sans-serif; }
    .logo { position: absolute; right: 8px; top: 9px; width: 110px; color: #fff; text-align: right; font-family: Lato, "Noto Sans", sans-serif; font-weight: 900; }
    .an { font-size: 41px; line-height: 34px; letter-spacing: -.3px; }
    .yr { font-size: 18.5px; line-height: 20px; margin-top: 3px; }
    .rule { height: 2px; background: #d8e0f4; margin: 4px 1px 0 0; }
    .st { font-size: 18.5px; line-height: 22px; text-align: left; padding-left: 7px; color: #f8faff; }
    .scale { position: absolute; left: 1009px; top: 1122px; width: 902px; display: flex; flex-direction: column; }
    .slab { height: 14px; position: relative; font: 11px "Liberation Sans", sans-serif; color: #222; }
    .slab span { position: absolute; transform: translateX(-50%); white-space: nowrap; top: 0; }
    .slab span.end { transform: translateX(-15px); }
    .bar { height: 23px; margin-top: 5px; display: flex; border-top: 2px solid #777; border-bottom: 1.5px solid #111; border-right: 1px solid #111; border-left: 1px solid #111; }
    .bar i { flex: 1; }
    .bar i:nth-child(odd) { background: #000; }
    .bar i:nth-child(even) { background: #f4f7fd; }
    .slab.b { margin-top: 16px; }
    .status { height: 20px; flex: none; background: #0078cc; color: #e6f1fa; display: flex; align-items: center; justify-content: flex-end; }
    .status span { white-space: nowrap; flex: none; }
    .status .wide { letter-spacing: .3px; }
    .status .up::before { content: ""; display: block; width: 0; height: 0; border: 4px solid transparent; border-bottom: 5px solid #fff; border-top: 0; }
    .foot { height: 1px; flex: none; background: #d0d0d4; }
  `;

  renderGroup(g: any) {
    return html`<div class="group" style="width:${g.w}px">
      <div class="gc" style="padding-left:${g.pad ?? 0}px">
        ${g.items.map((it: any) =>
          it.k === "b"
            ? html`<div class="bigb ${it.dis ? "dis" : ""}" style="width:${it.w}px">
                <span class="bigi">${ICON[it.i]}</span>
                ${it.l.map((t: string, i: number) => html`<span class="bt">${t}${it.car && i === it.l.length - 1 ? html`<i class="car"></i>` : ""}</span>`)}
              </div>`
            : html`<div class="col" style="width:${it.w}px;padding-left:${it.p}px">
                ${it.rows.map((r: any) => html`<div class="sr ${r[2] ? "dis" : ""}">${ICON[r[0]]}<span>${r[1]}</span></div>`)}
              </div>`
        )}
      </div>
      <div class="gl">${g.label}</div>
    </div>`;
  }

  render() {
    return html`<div class="app">
      <div class="title">
        <div class="tl">
          <svg width="18" height="18" viewBox="0 0 18 18"><rect width="18" height="18" fill="#111"/><circle cx="11.5" cy="6" r="3.6" fill="none" stroke="#f0a010" stroke-width="2.4"/><circle cx="6" cy="12.5" r="3.4" fill="none" stroke="#e8b020" stroke-width="2.2"/></svg>
          <span class="sv">
            <svg width="14" height="18" viewBox="0 0 14 18"><path d="M1 1 H11 L13 3 V17 H1 Z" fill="#fff" stroke="#4a90e8" stroke-width="1.2"/><path d="M4 1 V6 H10 V1 M4 17 V11 H10 V17" fill="none" stroke="#4a90e8"/></svg>
            <svg width="7" height="8" viewBox="0 0 7 8"><path d="M0 1.5 H7 M0 3 H7 L3.5 7.5 Z" stroke="#555" fill="#555" stroke-width=".8"/></svg>
          </span>
        </div>
        <div class="ctx">Context</div>
        <div class="ttl">A : Static Structural - Mechanical [Ansys Mechanical Enterprise]</div>
        <div class="win">
          <svg width="10" height="10" viewBox="0 0 10 10"><path d="M0 5 H10" stroke="#111" stroke-width="2"/></svg>
          <svg width="12" height="12" viewBox="0 0 12 12"><rect x="1" y="4" width="7" height="7" fill="none" stroke="#111" stroke-width="1.4"/><path d="M4 3 V1 H11 V8 H9" fill="none" stroke="#111" stroke-width="1.4"/></svg>
          <svg width="12" height="12" viewBox="0 0 12 12"><path d="M1 1 L11 11 M11 1 L1 11" stroke="#111" stroke-width="1.6"/></svg>
        </div>
      </div>
      <div class="tabs">
        ${[["File", 56, "file"], ["Home", 68.5, ""], ["Mesh", 52.5, "on"], ["Display", 70, ""], ["Selection", 70, ""], ["Automation", 94, ""], ["Add-ons", 68, ""], ["Learning and Support", 144, ""]].map(
          (t: any) => html`<div class="tab ${t[2]}" style="width:${t[1]}px">${t[0]}</div>`
        )}
        <div class="ql">
          <div class="qlb">Quick Launch</div>
          <div class="qli">
            <svg width="12" height="7" viewBox="0 0 12 7"><path d="M1 6 L6 1 L11 6" stroke="#d8a020" stroke-width="1.6" fill="none"/></svg>
            <svg width="14" height="14" viewBox="0 0 14 14"><rect x="1.5" y="1.5" width="11" height="11" fill="#fff" stroke="#555" transform="rotate(-6 7 7)"/><path d="M3.5 7 L6 11 L11 3" stroke="#d89a10" stroke-width="1.5" fill="none"/></svg>
            <svg width="22" height="14" viewBox="0 0 22 14"><circle cx="7" cy="7" r="7" fill="#4a90f0"/><text x="7" y="11" font-size="11" font-weight="700" font-family="Roboto" fill="#fff" text-anchor="middle">?</text><path d="M15 5 H21 L18 9 Z" fill="#222"/></svg>
          </div>
        </div>
      </div>
      <div class="ribbon">
        ${GROUPS.map((g) => this.renderGroup(g))}
        <div class="last">
          <div class="pcol">
            ${[["probe", "Probe"], ["max", "Max"], ["min", "Min"]].map((r) => html`<div class="sr dis">${ICON[r[0]]}<span>${r[1]}</span></div>`)}
            <div class="gl" style="margin:-1px 0 0 -26px;width:76px">Metrics Display</div>
          </div>
          <div class="snap"><span class="cb"><svg width="9" height="9" viewBox="0 0 9 9"><path d="M1 4.5 L3.5 7.5 L8 1" stroke="#333" stroke-width="1.2" fill="none"/></svg></span>Snap</div>
        </div>
      </div>
      <div class="body">
        <div class="left">
          <div class="ph">Outline<span class="dots"></span>${pinIcons}</div>
          <div class="srow">
            <span class="grip"></span>
            <span class="fld f1">Name<svg width="8" height="5" viewBox="0 0 8 5"><path d="M0 0 H8 L4 4 Z" fill="#888"/></svg></span>
            <span class="fld f2">Search Outline</span>
            <svg style="margin-left:6px" width="12" height="7" viewBox="0 0 12 7"><path d="M1 1 L6 6 L11 1" stroke="#d8a020" stroke-width="1.6" fill="none"/></svg>
            <svg style="margin:9px 0 0 8px" width="6" height="4" viewBox="0 0 6 4"><path d="M0 0 H6 L3 4 Z" fill="#222"/></svg>
          </div>
          <div class="tree">
            <svg class="conn" width="515" height="270">
              <path d="M12.5 16 V24 M12.5 24 M39.5 32 V120 M66.5 128 V184 M93.5 192 V248
                M17 24 H28 M44 40 H54 M44 56 H54 M44 72 H54 M44 88 H54 M39.5 104 H54 M44 120 H54
                M66.5 136 H81 M66.5 152 H81 M66.5 168 H81 M71 184 H81
                M93.5 200 H108 M93.5 216 H108 M93.5 232 H108 M93.5 248 H108" stroke="#808080" stroke-dasharray="1 1" fill="none"/>
            </svg>
            ${TREE.map(([d, ic, label, bold, ex, hl]) =>
              d === 0
                ? html`<div class="tr" style="padding-left:9px"><span class="ti">${TICON[ic]}</span><span class="tt b" style="margin-left:0">${label}</span></div>`
                : html`<div class="tr" style="padding-left:${27 * d - 19}px">
                    <span class="slot">${ex === "-" || ex === "+" ? exp(ex) : ""}</span>
                    <span class="chk">${d > 1 ? check : ""}</span>
                    <span class="ti">${TICON[ic]}</span>
                    <span class="tt ${bold ? "b" : ""} ${hl ? "h" : ""}">${label}</span>
                  </div>`
            )}
          </div>
          <div class="sp"></div>
          <div class="ph">Details of "Mesh"<span class="dots"></span>${pinIcons}</div>
          <div class="dt">
            ${DETAILS.map((r) =>
              r[0] === "-" || r[0] === "+"
                ? html`<div class="dr"><span class="gut">${exp(r[0])}</span><span class="cell cat">${r[1]}</span></div>`
                : html`<div class="dr"><span class="gut"></span>
                    <span class="cell k">${r[0] === "c" ? html`<i class="cb2"></i>` : ""}${r[1]}</span>
                    <span class="cell">${r[2]}</span></div>`
            )}
            <div class="dend"></div>
          </div>
        </div>
        <div class="right">
          <div class="tb">
            ${T.map((t) => {
              if (typeof t[0] === "number") return html`<span class="tbi" style="width:${t[0]}px"></span>`;
              if (t[0] === "grip") return html`<span class="tbi" style="width:${t[1]}px"><span class="grip" style="margin:0"></span></span>`;
              if (t[0] === "x") return html`<span class="tbi txt" style="width:${t[1]}px">${t[2]}</span>`;
              if (t[0] === "d") return html`<span class="tbi" style="width:${t[1]}px"><svg width="7" height="4" viewBox="0 0 7 4"><path d="M0 0 H7 L3.5 4 Z" fill="#888"/></svg></span>`;
              if (t[0] === "tri") return html`<span class="tbi" style="width:${t[1]}px"><svg width="7" height="14" viewBox="0 0 7 14"><path d="M0 9 H7 L3.5 13 Z" fill="#111"/></svg></span>`;
              return html`<span class="tbi ${t[3] ?? ""}" style="width:${t[1]}px">${t[2] ? TB[t[2]] : ""}</span>`;
            })}
          </div>
          <div class="vp">
            <svg class="scene" width="2921" height="1209" viewBox="519 163 2921 1209">
              ${meshShape()}
              ${triad}
            </svg>
            <div class="logo">
              <div class="an">Ansys</div>
              <div class="yr">2024 R1</div>
              <div class="rule"></div>
              <div class="st">STUDENT</div>
            </div>
            <div class="scale">
              <div class="slab"><span style="left:0">0.000</span><span style="left:50%">0.040</span><span class="end" style="left:100%">0.080&nbsp;(m)</span></div>
              <div class="bar"><i></i><i></i><i></i><i></i></div>
              <div class="slab b"><span style="left:25%">0.020</span><span style="left:75%">0.060</span></div>
            </div>
          </div>
        </div>
      </div>
      <div class="status">
        ${STATUS.map((s) => html`<span class=${s[2]} style="width:${s[1]}px">${s[0]}</span>`)}
      </div>
      <div class="foot"></div>
    </div>`;
  }
}
